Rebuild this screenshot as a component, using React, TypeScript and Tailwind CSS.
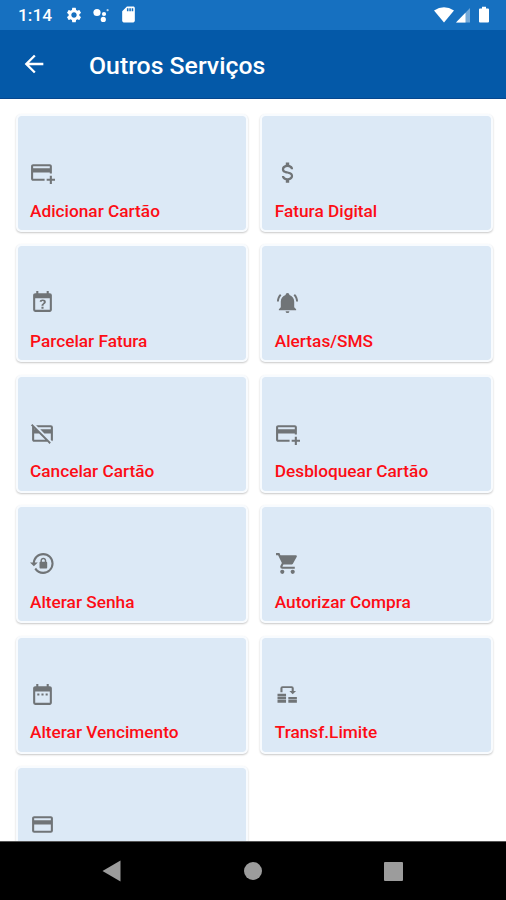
import React from 'react';
import { MdArrowBack, MdDateRange, MdSdCard, MdSettings } from 'react-icons/md';

const paths = {
    cardPlus: 'M21,18H24V20H21V23H19V20H16V18H19V15H21V18M19,8V6H3V8H19M19,12H3V18H14V20H3C1.89,20 1,19.1 1,18V6C1,4.89 1.89,4 3,4H19C20.1,4 21,4.9 21,6V13H19V12Z',
    dollar: 'M7,15H9C9,16.08 10.37,17 12,17C13.63,17 15,16.08 15,15C15,13.9 13.96,13.5 11.76,12.97C9.64,12.44 7,11.78 7,9C7,7.21 8.47,5.69 10.5,5.18V3H13.5V5.18C15.53,5.69 17,7.21 17,9H15C15,7.92 13.63,7 12,7C10.37,7 9,7.92 9,9C9,10.1 10.04,10.5 12.24,11.03C14.36,11.56 17,12.22 17,15C17,16.79 15.53,18.31 13.5,18.82V21H10.5V18.82C8.47,18.31 7,16.79 7,15Z',
    calendarQuestion: 'M6,1V3H5C3.89,3 3,3.89 3,5V19A2,2 0 0,0 5,21H19C20.1,21 21,20.1 21,19V5A2,2 0 0,0 19,3H18V1H16V3H8V1H6M5,8H19V19H5V8M12.19,9C11.32,9 10.62,9.2 10.08,9.59C9.56,10 9.3,10.57 9.31,11.36L9.32,11.39H11.25C11.26,11.09 11.35,10.86 11.53,10.7C11.71,10.55 11.93,10.47 12.19,10.47C12.5,10.47 12.76,10.57 12.94,10.75C13.12,10.94 13.2,11.2 13.2,11.5C13.2,11.82 13.13,12.09 12.97,12.32C12.83,12.55 12.62,12.75 12.36,12.91C11.85,13.25 11.5,13.55 11.31,13.82C11.11,14.08 11,14.5 11,15H13C13,14.69 13.04,14.44 13.13,14.26C13.22,14.08 13.39,13.9 13.64,13.74C14.09,13.5 14.46,13.21 14.75,12.81C15.04,12.41 15.19,12 15.19,11.5C15.19,10.74 14.92,10.13 14.38,9.68C13.85,9.23 13.12,9 12.19,9M11,16V18H13V16H11Z',
    bell: 'M21,19V20H3V19L5,17V11C5,7.9 7.03,5.17 10,4.29C10,4.19 10,4.1 10,4A2,2 0 0,1 12,2A2,2 0 0,1 14,4C14,4.1 14,4.19 14,4.29C16.97,5.17 19,7.9 19,11V17L21,19M14,21A2,2 0 0,1 12,23A2,2 0 0,1 10,21M19.75,3.19L18.33,4.61C20.04,6.3 21,8.6 21,11H23C23,8.07 21.84,5.25 19.75,3.19M1,11H3C3,8.6 3.96,6.3 5.67,4.61L4.25,3.19C2.16,5.25 1,8.07 1,11Z',
    cardOff: 'M0.93,4.2L2.21,2.93L20,20.72L18.73,22L16.73,20H4C2.89,20 2,19.1 2,18V6C2,5.78 2.04,5.57 2.11,5.38L0.93,4.2M20,8V6H7.82L5.82,4H20A2,2 0 0,1 22,6V18C22,18.6 21.74,19.13 21.32,19.5L19.82,18H20V12H13.82L9.82,8H20M4,8H4.73L4,7.27V8M4,12V18H14.73L8.73,12H4Z',
    lockReset: 'M12.63,2C18.16,2 22.64,6.5 22.64,12C22.64,17.5 18.16,22 12.63,22C9.12,22 6.05,20.18 4.26,17.43L5.84,16.18C7.25,18.47 9.76,20 12.64,20A8,8 0 0,0 20.64,12A8,8 0 0,0 12.64,4C8.56,4 5.2,7.06 4.71,11H7.47L3.73,14.73L0,11H2.69C3.19,5.95 7.45,2 12.63,2M15.59,10.24C16.09,10.25 16.5,10.65 16.5,11.16V15.77C16.5,16.27 16.09,16.69 15.58,16.69H10.05C9.54,16.69 9.13,16.27 9.13,15.77V11.16C9.13,10.65 9.54,10.25 10.04,10.24V9.23C10.04,7.7 11.29,6.46 12.81,6.46C14.34,6.46 15.59,7.7 15.59,9.23V10.24M12.81,7.86C12.06,7.86 11.44,8.47 11.44,9.23V10.24H14.19V9.23C14.19,8.47 13.57,7.86 12.81,7.86Z',
    cart: 'M17,18C15.89,18 15,18.89 15,20A2,2 0 0,0 17,22A2,2 0 0,0 19,20C19,18.89 18.1,18 17,18M1,2V4H3L6.6,11.59L5.24,14.04C5.09,14.32 5,14.65 5,15A2,2 0 0,0 7,17H19V15H7.42A0.25,0.25 0 0,1 7.17,14.75C7.17,14.7 7.18,14.66 7.2,14.63L8.1,13H15.55C16.3,13 16.96,12.58 17.3,11.97L20.88,5.5C20.95,5.34 21,5.17 21,5A1,1 0 0,0 20,4H5.21L4.27,2M7,18C5.89,18 5,18.89 5,20A2,2 0 0,0 7,22A2,2 0 0,0 9,20C9,18.89 8.1,18 7,18Z',
    transfer: 'M5.2,9.8V6A2,2 0 0 1 7.2,4H16A2,2 0 0 1 18,6V8.6H20.2L17,11.8L13.8,8.6H16V5.8H7.2V9.8ZM2.4,11.2H10.6V13.8H2.4ZM2.4,14.3H10.6V16.8H2.4ZM2.4,17.3H10.6V20H2.4ZM12.8,14.3H21V16.8H12.8ZM12.8,17.3H21V20H12.8Z',
    card: 'M20,8H4V6H20M20,18H4V12H20M20,4H4C2.89,4 2,4.89 2,6V18A2,2 0 0,0 4,20H20A2,2 0 0,0 22,18V6C22,4.89 21.1,4 20,4Z',
};

const Icon = ({ d, className = 'w-[25px] h-[25px]' }: { d: string; className?: string }) => (
    <svg viewBox="0 0 24 24" className={className} fill="currentColor">
        <path d={d} />
    </svg>
);

const services = [
    { label: 'Adicionar Cartão', icon: <Icon d={paths.cardPlus} /> },
    { label: 'Fatura Digital', icon: <Icon d={paths.dollar} className="w-[27px] h-[27px] -m-px" /> },
    { label: 'Parcelar Fatura', icon: <Icon d={paths.calendarQuestion} /> },
    { label: 'Alertas/SMS', icon: <Icon d={paths.bell} className="w-[23px] h-[23px] m-px" /> },
    { label: 'Cancelar Cartão', icon: <Icon d={paths.cardOff} /> },
    { label: 'Desbloquear Cartão', icon: <Icon d={paths.cardPlus} /> },
    { label: 'Alterar Senha', icon: <Icon d={paths.lockReset} /> },
    { label: 'Autorizar Compra', icon: <Icon d={paths.cart} /> },
    { label: 'Alterar Vencimento', icon: <MdDateRange className="w-[25px] h-[25px]" /> },
    { label: 'Transf.Limite', icon: <Icon d={paths.transfer} /> },
    { label: '', icon: <Icon d={paths.card} /> },
];

const StatusBar = () => (
    <div className="h-[30px] shrink-0 bg-[#1670c0] flex items-center justify-between pl-[18px] pr-[14px] text-white">
        <div className="flex items-center">
            <span className="w-[47px] pt-0.5 text-[17.3px] leading-none font-medium">1:14</span>
            <MdSettings className="w-[18px] h-[18px]" />
            <svg viewBox="0 0 18 16" className="w-[18px] h-4 ml-2.5" fill="currentColor">
                <circle cx="4" cy="5.5" r="3.6" />
                <circle cx="11" cy="7" r="2.1" />
                <circle cx="10.3" cy="12.4" r="2.6" />
                <circle cx="14.6" cy="3.2" r="1.1" opacity="0.7" />
            </svg>
            <MdSdCard className="w-[19px] h-[19px] ml-2" />
        </div>
        <svg viewBox="0 0 58 20" className="w-[58px] h-5" fill="currentColor">
            <path d="M0,5.6Q10,-1 20,5.6L10,17.4Z" />
            <path d="M22,17.6L36,3V17.6Z" opacity="0.4" />
            <path d="M22,17.6L31.5,7.8V17.6Z" />
            <path d="M48,1.8H52V3.5H54Q55,3.5 55,4.5V16.6Q55,17.6 54,17.6H46Q45,17.6 45,16.6V4.5Q45,3.5 46,3.5H48Z" />
        </svg>
    </div>
);

const App = () => {
    return (
        <div className="w-full h-[900px] flex flex-col overflow-hidden bg-white font-[Roboto,sans-serif]">
            <StatusBar />

            <header className="h-[69px] shrink-0 bg-[#0459a8] border-b border-[#06478e] flex items-center pl-5 pb-px text-white">
                <MdArrowBack className="w-7 h-7" />
                <h1 className="ml-[41px] pt-1 text-[24.8px] leading-8 font-medium">Outros Serviços</h1>
            </header>

            <main className="flex-1 min-h-0 overflow-hidden pt-[15px] pl-[15.5px] pr-[13px]">
                <div className="grid grid-cols-2 gap-x-[12px] gap-y-[12.4px]">
                    {services.map((service, i) => (
                        <button
                            key={i}
                            type="button"
                            className="h-[118px] rounded-[5px] border-2 border-[#f8fbfe] bg-[#dce9f6] bg-clip-padding shadow-[0_1px_2px_rgba(0,0,0,0.22)] flex flex-col items-start pt-[44px] pl-[12.5px] text-left"
                        >
                            <span className="text-[#707477]">{service.icon}</span>
                            <span className="mt-[15.5px] text-[17.25px] leading-5 font-medium text-[#fd0d15] whitespace-nowrap">{service.label}</span>
                        </button>
                    ))}
                </div>
            </main>

            <nav className="h-[59px] shrink-0 bg-black border-t border-[#555] flex items-center justify-between pl-[102px] pr-[103px] text-[#9c9c9c]">
                <svg viewBox="0 0 20 22" className="w-5 h-[22px]" fill="currentColor">
                    <path d="M0.5,11L18.5,0.5V21.5Z" />
                </svg>
                <div className="w-[18px] h-[18px] rounded-full bg-[#9c9c9c]" />
                <div className="w-[19px] h-[19px] rounded-[1px] bg-[#9c9c9c]" />
            </nav>
        </div>
    );
};

export default App;
